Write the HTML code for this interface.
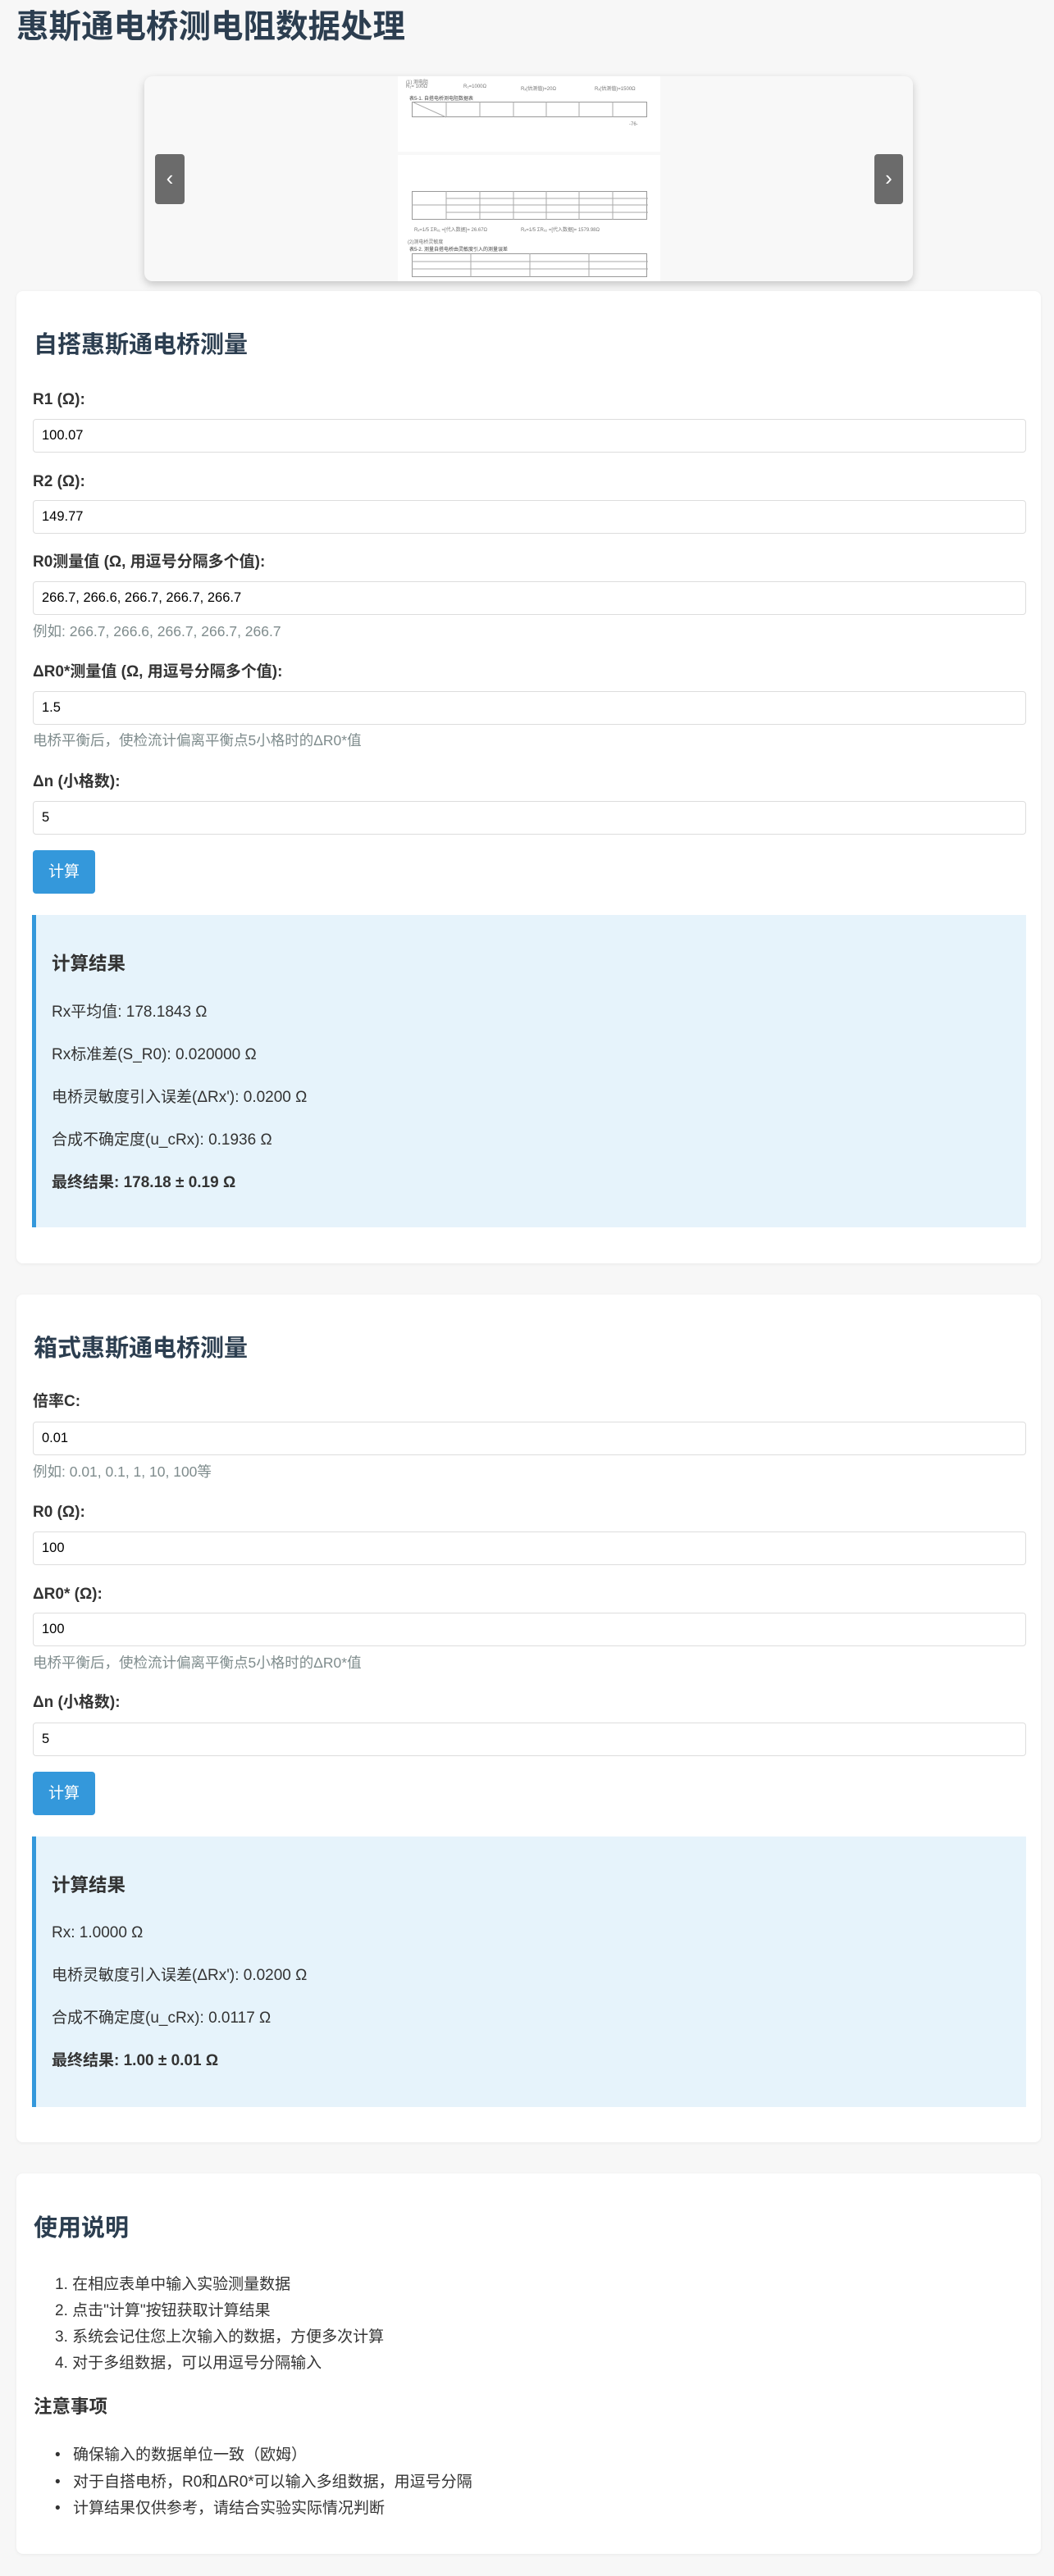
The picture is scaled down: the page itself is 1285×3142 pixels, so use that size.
<!DOCTYPE html>
<html><head><meta charset="utf-8">
<style>
*{box-sizing:border-box;margin:0;padding:0}
body{width:1285px;height:3142px;background:#f7f7f7;font-family:"Liberation Sans","Noto Sans CJK SC",sans-serif;color:#333;position:relative;overflow:hidden}
.a{position:absolute;white-space:nowrap}
h1,h2{color:#2c3e50;font-weight:bold}
.card{position:absolute;left:20px;width:1249px;background:#fff;border-radius:8px;box-shadow:0 1px 4px rgba(0,0,0,.06)}
.lbl{position:absolute;left:20px;font-weight:bold;font-size:19px;line-height:24px;color:#333}
.inp{position:absolute;left:20px;width:1211px;height:41px;border:1px solid #ddd;border-radius:4px;font-size:16.5px;line-height:39px;padding-left:10px;color:#000;background:#fff}
.hint{position:absolute;left:20px;font-size:17.5px;line-height:22px;color:#7f8c8d}
.btn{position:absolute;left:20px;width:76px;height:53px;background:#3498db;color:#fff;border-radius:4px;font-size:19px;line-height:53px;text-align:center}
.res{position:absolute;left:19px;width:1212px;background:#e6f3fb;border-left:5px solid #3498db}
.rl{position:absolute;left:19px;font-size:19px;line-height:24px;white-space:nowrap}
.h3{font-weight:bold;font-size:22.5px;line-height:28px}
.doc{position:absolute;background:#fff}
.doc span{position:absolute;font-size:6px;color:#777;white-space:nowrap}
</style></head><body>
<h1 class="a" style="left:20px;top:9px;font-size:39.5px;line-height:48px">惠斯通电桥测电阻数据处理</h1>

<div class="a" style="left:176px;top:93px;width:937px;height:250px;background:#f8f8f8;border-radius:10px;box-shadow:0 4px 10px rgba(0,0,0,.2);overflow:hidden">
  <div class="doc" style="left:309px;top:0;width:320px;height:92px">
    <span style="left:10px;top:2px">(1) 测电阻</span>
    <span style="left:10px;top:10px">R₁= 100Ω</span><span style="left:80px;top:10px">R₂=1000Ω</span><span style="left:150px;top:10px">Rₓ(估测值)=20Ω</span><span style="left:240px;top:10px">Rₓ(估测值)=1500Ω</span>
    <span style="left:14px;top:22px;color:#444">表5-1. 自搭电桥测电阻数据表</span>
    <svg style="position:absolute;left:17px;top:31px" width="288" height="20"><rect x=".5" y=".5" width="286" height="18" fill="none" stroke="#999"/><g stroke="#aaa"><line x1="42" y1="0" x2="42" y2="19"/><line x1="83" y1="0" x2="83" y2="19"/><line x1="124" y1="0" x2="124" y2="19"/><line x1="164" y1="0" x2="164" y2="19"/><line x1="204" y1="0" x2="204" y2="19"/><line x1="245" y1="0" x2="245" y2="19"/><line x1="0" y1="0" x2="42" y2="19"/></g></svg>
    <span style="left:282px;top:56px">-76-</span>
  </div>
  <div class="doc" style="left:309px;top:96px;width:320px;height:160px">
    <svg style="position:absolute;left:17px;top:44px" width="288" height="36"><rect x=".5" y=".5" width="286" height="34" fill="none" stroke="#999"/><g stroke="#aaa"><line x1="42" y1="0" x2="42" y2="35"/><line x1="83" y1="0" x2="83" y2="35"/><line x1="124" y1="0" x2="124" y2="35"/><line x1="164" y1="0" x2="164" y2="35"/><line x1="204" y1="0" x2="204" y2="35"/><line x1="245" y1="0" x2="245" y2="35"/><line x1="0" y1="17" x2="288" y2="17"/><line x1="42" y1="9" x2="288" y2="9"/><line x1="42" y1="26" x2="288" y2="26"/></g></svg>
    <span style="left:20px;top:86px">Rₓ=1/5 ΣRₓ₁ =[代入数据]= 26.67Ω</span><span style="left:150px;top:86px">Rₓ=1/5 ΣRₓ₂ =[代入数据]= 1579.98Ω</span>
    <span style="left:12px;top:101px">(2)测电桥灵敏度</span>
    <span style="left:14px;top:110px;color:#444">表5-2. 测量自搭电桥由灵敏度引入的测量误差</span>
    <svg style="position:absolute;left:17px;top:120px" width="288" height="30"><rect x=".5" y=".5" width="286" height="28" fill="none" stroke="#999"/><g stroke="#aaa"><line x1="72" y1="0" x2="72" y2="29"/><line x1="144" y1="0" x2="144" y2="29"/><line x1="216" y1="0" x2="216" y2="29"/><line x1="0" y1="10" x2="288" y2="10"/><line x1="0" y1="19" x2="288" y2="19"/></g></svg>
  </div>
  <div class="a" style="left:13px;top:95px;width:36px;height:61px;background:#6b6b6b;border-radius:4px;color:#fff;font-size:26px;line-height:58px;text-align:center">‹</div>
  <div class="a" style="left:890px;top:95px;width:35px;height:61px;background:#6b6b6b;border-radius:4px;color:#fff;font-size:26px;line-height:58px;text-align:center">›</div>
</div>

<!-- card 1 -->
<div class="card" style="top:355px;height:1186px">
  <h2 class="a" style="left:21px;top:48px;font-size:29px;line-height:36px">自搭惠斯通电桥测量</h2>
  <div class="lbl" style="top:121px">R1 (Ω):</div>
  <div class="inp" style="top:156px">100.07</div>
  <div class="lbl" style="top:221px">R2 (Ω):</div>
  <div class="inp" style="top:255px">149.77</div>
  <div class="lbl" style="top:319px">R0测量值 (Ω, 用逗号分隔多个值):</div>
  <div class="inp" style="top:354px">266.7, 266.6, 266.7, 266.7, 266.7</div>
  <div class="hint" style="top:404px">例如: 266.7, 266.6, 266.7, 266.7, 266.7</div>
  <div class="lbl" style="top:453px">ΔR0*测量值 (Ω, 用逗号分隔多个值):</div>
  <div class="inp" style="top:488px">1.5</div>
  <div class="hint" style="top:537px">电桥平衡后，使检流计偏离平衡点5小格时的ΔR0*值</div>
  <div class="lbl" style="top:587px">Δn (小格数):</div>
  <div class="inp" style="top:622px">5</div>
  <div class="btn" style="top:682px">计算</div>
  <div class="res" style="top:761px;height:381px">
    <div class="rl h3" style="top:46px">计算结果</div>
    <div class="rl" style="top:107px">Rx平均值: 178.1843 Ω</div>
    <div class="rl" style="top:159px">Rx标准差(S_R0): 0.020000 Ω</div>
    <div class="rl" style="top:211px">电桥灵敏度引入误差(ΔRx'): 0.0200 Ω</div>
    <div class="rl" style="top:263px">合成不确定度(u_cRx): 0.1936 Ω</div>
    <div class="rl" style="top:315px;font-weight:bold">最终结果: 178.18 ± 0.19 Ω</div>
  </div>
</div>

<!-- card 2 -->
<div class="card" style="top:1579px;height:1034px">
  <h2 class="a" style="left:21px;top:48px;font-size:29px;line-height:36px">箱式惠斯通电桥测量</h2>
  <div class="lbl" style="top:119px">倍率C:</div>
  <div class="inp" style="top:155px">0.01</div>
  <div class="hint" style="top:205px">例如: 0.01, 0.1, 1, 10, 100等</div>
  <div class="lbl" style="top:254px">R0 (Ω):</div>
  <div class="inp" style="top:289px">100</div>
  <div class="lbl" style="top:354px">ΔR0* (Ω):</div>
  <div class="inp" style="top:388px">100</div>
  <div class="hint" style="top:438px">电桥平衡后，使检流计偏离平衡点5小格时的ΔR0*值</div>
  <div class="lbl" style="top:486px">Δn (小格数):</div>
  <div class="inp" style="top:522px">5</div>
  <div class="btn" style="top:582px">计算</div>
  <div class="res" style="top:661px;height:330px">
    <div class="rl h3" style="top:46px">计算结果</div>
    <div class="rl" style="top:106px">Rx: 1.0000 Ω</div>
    <div class="rl" style="top:158px">电桥灵敏度引入误差(ΔRx'): 0.0200 Ω</div>
    <div class="rl" style="top:210px">合成不确定度(u_cRx): 0.0117 Ω</div>
    <div class="rl" style="top:262px;font-weight:bold">最终结果: 1.00 ± 0.01 Ω</div>
  </div>
</div>

<!-- card 3 -->
<div class="card" style="top:2651px;height:464px">
  <h2 class="a" style="left:21px;top:49px;font-size:29px;line-height:36px">使用说明</h2>
  <div class="a" style="left:47px;top:120px;font-size:19px;line-height:32px">
    <div>1. 在相应表单中输入实验测量数据</div>
    <div>2. 点击"计算"按钮获取计算结果</div>
    <div>3. 系统会记住您上次输入的数据，方便多次计算</div>
    <div>4. 对于多组数据，可以用逗号分隔输入</div>
  </div>
  <div class="a" style="left:21px;top:271px;font-size:22.5px;line-height:28px;font-weight:bold">注意事项</div>
  <div class="a" style="left:47px;top:328px;font-size:19px;line-height:32.5px">
    <div><span style="display:inline-block;width:22px">•</span>确保输入的数据单位一致（欧姆）</div>
    <div><span style="display:inline-block;width:22px">•</span>对于自搭电桥，R0和ΔR0*可以输入多组数据，用逗号分隔</div>
    <div><span style="display:inline-block;width:22px">•</span>计算结果仅供参考，请结合实验实际情况判断</div>
  </div>
</div>
</body></html>
